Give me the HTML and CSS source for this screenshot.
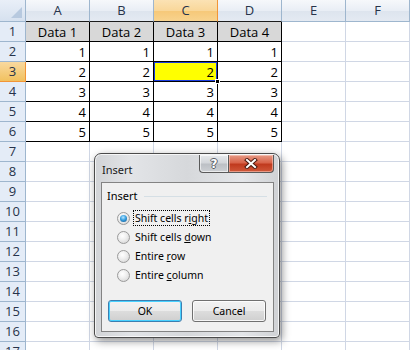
FILE: index.html
```html
<!DOCTYPE html>
<html>
<head>
<meta charset="utf-8">
<link rel="stylesheet" href="styles.css">
</head>
<body>
<div class="sheet">
  <div class="corner"><span class="tri"></span></div>
  <div class="ch tb">A</div><div class="ch tb">B</div><div class="ch tb sel">C</div><div class="ch tb">D</div><div class="ch">E</div><div class="ch">F</div>

  <div class="rh">1</div><div class="c t hdr">Data 1</div><div class="c t hdr">Data 2</div><div class="c t hdr">Data 3</div><div class="c t hdr">Data 4</div><div class="c"></div><div class="c"></div>
  <div class="rh">2</div><div class="c t">1</div><div class="c t">1</div><div class="c t">1</div><div class="c t">1</div><div class="c"></div><div class="c"></div>
  <div class="rh sel">3</div><div class="c t">2</div><div class="c t">2</div><div class="c t active">2</div><div class="c t">2</div><div class="c"></div><div class="c"></div>
  <div class="rh">4</div><div class="c t">3</div><div class="c t">3</div><div class="c t">3</div><div class="c t">3</div><div class="c"></div><div class="c"></div>
  <div class="rh">5</div><div class="c t">4</div><div class="c t">4</div><div class="c t">4</div><div class="c t">4</div><div class="c"></div><div class="c"></div>
  <div class="rh">6</div><div class="c t">5</div><div class="c t">5</div><div class="c t">5</div><div class="c t">5</div><div class="c"></div><div class="c"></div>
  <div class="rh">7</div><div class="c"></div><div class="c"></div><div class="c"></div><div class="c"></div><div class="c"></div><div class="c"></div>
  <div class="rh">8</div><div class="c"></div><div class="c"></div><div class="c"></div><div class="c"></div><div class="c"></div><div class="c"></div>
  <div class="rh">9</div><div class="c"></div><div class="c"></div><div class="c"></div><div class="c"></div><div class="c"></div><div class="c"></div>
  <div class="rh">10</div><div class="c"></div><div class="c"></div><div class="c"></div><div class="c"></div><div class="c"></div><div class="c"></div>
  <div class="rh">11</div><div class="c"></div><div class="c"></div><div class="c"></div><div class="c"></div><div class="c"></div><div class="c"></div>
  <div class="rh">12</div><div class="c"></div><div class="c"></div><div class="c"></div><div class="c"></div><div class="c"></div><div class="c"></div>
  <div class="rh">13</div><div class="c"></div><div class="c"></div><div class="c"></div><div class="c"></div><div class="c"></div><div class="c"></div>
  <div class="rh">14</div><div class="c"></div><div class="c"></div><div class="c"></div><div class="c"></div><div class="c"></div><div class="c"></div>
  <div class="rh">15</div><div class="c"></div><div class="c"></div><div class="c"></div><div class="c"></div><div class="c"></div><div class="c"></div>
  <div class="rh">16</div><div class="c"></div><div class="c"></div><div class="c"></div><div class="c"></div><div class="c"></div><div class="c"></div>
  <div class="rh">17</div><div class="c"></div><div class="c"></div><div class="c"></div><div class="c"></div><div class="c"></div><div class="c"></div>
</div>

<div class="dialog">
  <div class="titlebar">
    <span class="title">Insert</span>
    <div class="caps">
      <div class="cap help">?</div>
      <div class="cap close">
        <svg width="14" height="11" viewBox="0 0 14 11">
          <path d="M3 2 L11 9 M11 2 L3 9" stroke="#4a1a10" stroke-width="4" stroke-linecap="square"/>
          <path d="M3 2 L11 9 M11 2 L3 9" stroke="#ffffff" stroke-width="2" stroke-linecap="square"/>
        </svg>
      </div>
    </div>
  </div>
  <div class="client">
    <div class="group"><span class="glabel">Insert</span><span class="gline"></span></div>
    <div class="opts">
      <div class="opt"><span class="radio on"></span><span class="lbl focus">Shift cells r<u>i</u>ght</span></div>
      <div class="opt"><span class="radio"></span><span class="lbl">Shift cells <u>d</u>own</span></div>
      <div class="opt"><span class="radio"></span><span class="lbl">Entire <u>r</u>ow</span></div>
      <div class="opt"><span class="radio"></span><span class="lbl">Entire <u>c</u>olumn</span></div>
    </div>
    <div class="btns">
      <div class="btn def">OK</div>
      <div class="btn">Cancel</div>
    </div>
  </div>
</div>
</body>
</html>
```

FILE: styles.css
```css
html, body {
  margin: 0;
  padding: 0;
  width: 410px;
  height: 350px;
  overflow: hidden;
  background: #ffffff;
}

.sheet {
  display: grid;
  grid-template-columns: 26px repeat(6, 64px);
  grid-template-rows: 22px repeat(17, 20px);
  font-family: "Open Sans", "Noto Sans", sans-serif;
  font-size: 13px;
  color: #000;
}

.sheet > div {
  box-sizing: border-box;
}

.corner {
  position: relative;
  background: linear-gradient(#e9eff8, #d6e1ef);
  border-right: 1px solid #9eb6ce;
  border-bottom: 1px solid #9eb6ce;
}
.tri {
  position: absolute;
  right: 3px;
  bottom: 3px;
  width: 0;
  height: 0;
  border-left: 11px solid transparent;
  border-bottom: 11px solid #b7c9df;
}

.ch {
  background: linear-gradient(#f6f8fb 0%, #e9eef5 50%, #dde4ee 51%, #e4eaf2 100%);
  border-right: 1px solid #9eb6ce;
  border-bottom: 1px solid #9eb6ce;
  text-align: center;
  line-height: 21px;
  color: #27334a;
}
.ch.tb {
  border-bottom-color: #1c1c1c;
}
.ch.sel {
  background: linear-gradient(#fbe2b4 0%, #f9d79a 50%, #f6c878 51%, #f8d38e 100%);
  border-right-color: #f29536;
}

.rh {
  background: #e4ecf7;
  border-right: 1px solid #9eb6ce;
  border-bottom: 1px solid #9eb6ce;
  text-align: center;
  line-height: 19px;
  color: #27334a;
}
.rh.sel {
  background: linear-gradient(#f9d99f, #f1c15f);
  border-bottom-color: #f29536;
  border-right-color: #f29536;
}

.c {
  border-right: 1px solid #d0d7e5;
  border-bottom: 1px solid #d0d7e5;
  text-align: right;
  padding: 0 3px;
  line-height: 20px;
  white-space: nowrap;
}
.c.t {
  border-right-color: #000;
  border-bottom-color: #000;
}
.c.hdr {
  background: #d8d8d8;
  text-align: center;
}
.c.active {
  position: relative;
  background: #ffff00;
}
.c.active::before {
  content: "";
  position: absolute;
  left: -1px;
  top: -1px;
  right: -1px;
  bottom: -1px;
  border: 1px solid #000;
  box-shadow: inset 0 0 0 1px #1d3fe0;
}
.c.active::after {
  content: "";
  position: absolute;
  right: -3px;
  bottom: -3px;
  width: 3px;
  height: 3px;
  background: #000;
  border: 1px solid #fff;
}

/* Dialog */
.dialog {
  position: absolute;
  left: 94px;
  top: 153px;
  width: 186px;
  height: 185px;
  box-sizing: border-box;
  border: 1px solid #4b4b4b;
  border-radius: 7px 7px 4px 4px;
  background: linear-gradient(to right, #d2d4d7 0%, #e2e4e7 20%, #d6d8db 50%, #e4e6e9 80%, #d0d2d5 100%);
  box-shadow: inset 0 0 0 1px rgba(255,255,255,0.75), 2px 3px 8px rgba(0,0,0,0.45);
  display: flex;
  flex-direction: column;
  font-family: "Noto Sans", "Open Sans", sans-serif;
  font-size: 10.5px;
  color: #000;
}

.titlebar {
  height: 28px;
  display: flex;
  align-items: flex-start;
  justify-content: space-between;
  padding: 0 5px 0 7px;
}
.title {
  font-size: 11px;
  margin-top: 8px;
  color: #1a1a1a;
}
.caps {
  display: flex;
  margin-top: 1px;
}
.cap {
  height: 18px;
  box-sizing: border-box;
  border: 1px solid #5a5a5a;
  border-top: none;
  display: flex;
  align-items: center;
  justify-content: center;
}
.cap.help {
  width: 29px;
  border-radius: 0 0 0 4px;
  border-right: none;
  background: linear-gradient(#e7e9ec 0%, #d3d6da 45%, #bcc0c5 55%, #cdd0d4 100%);
  box-shadow: inset 0 0 0 1px rgba(255,255,255,0.6);
  font-family: "DejaVu Sans", sans-serif;
  font-weight: bold;
  font-size: 12px;
  color: #ffffff;
  text-shadow: -1px 0 #5a5e66, 1px 0 #5a5e66, 0 -1px #5a5e66, 0 1px #5a5e66;
}
.cap.close {
  width: 46px;
  border-radius: 0 0 4px 0;
  background: linear-gradient(#e69a86 0%, #d8644a 45%, #c03a1e 55%, #d0583a 100%);
  box-shadow: inset 0 0 0 1px rgba(255,220,210,0.5);
}

.client {
  flex: 1;
  margin: 0 5px 5px 6px;
  box-sizing: border-box;
  border: 1px solid #838383;
  background: #f0f0f0;
  display: flex;
  flex-direction: column;
  padding: 6px 5px 0 5px;
}

.group {
  display: flex;
  align-items: center;
  height: 14px;
}
.glabel {
  font-size: 11px;
  line-height: 14px;
}
.gline {
  flex: 1;
  height: 1px;
  background: #d5dfe5;
  margin-left: 6px;
  margin-right: 1px;
}

.opts {
  display: flex;
  flex-direction: column;
  padding-left: 10px;
  margin-top: 7px;
  gap: 3px;
}
.opt {
  display: flex;
  align-items: center;
  height: 16px;
}
.radio {
  width: 13px;
  height: 13px;
  box-sizing: border-box;
  border-radius: 50%;
  border: 1px solid #9a9a9a;
  background: radial-gradient(circle at 40% 35%, #ffffff 0%, #f0f0f0 40%, #cfcfcf 100%);
  position: relative;
  margin-right: 3px;
}
.radio.on::after {
  content: "";
  position: absolute;
  left: 2px;
  top: 2px;
  width: 7px;
  height: 7px;
  border-radius: 50%;
  background: radial-gradient(circle at 45% 35%, #b9e6ff 0%, #38a0e0 45%, #0b4f8a 100%);
}
.lbl {
  font-size: 10.5px;
  line-height: 14px;
  padding: 0 1px;
  border: 1px solid transparent;
}
.lbl.focus {
  border: 1px dotted #000;
}

.btns {
  display: flex;
  gap: 10px;
  margin-top: 17px;
  padding-left: 1px;
}
.btn {
  width: 74px;
  height: 22px;
  box-sizing: border-box;
  border: 1px solid #707070;
  border-radius: 3px;
  background: linear-gradient(#f2f2f2 0%, #ebebeb 49%, #dddddd 50%, #cfcfcf 100%);
  box-shadow: inset 0 0 0 1px rgba(255,255,255,0.8);
  display: flex;
  align-items: center;
  justify-content: center;
  font-size: 10.5px;
}
.btn.def {
  border-color: #3c7fb1;
  box-shadow: inset 0 0 0 1px #48d1ff;
}
```
